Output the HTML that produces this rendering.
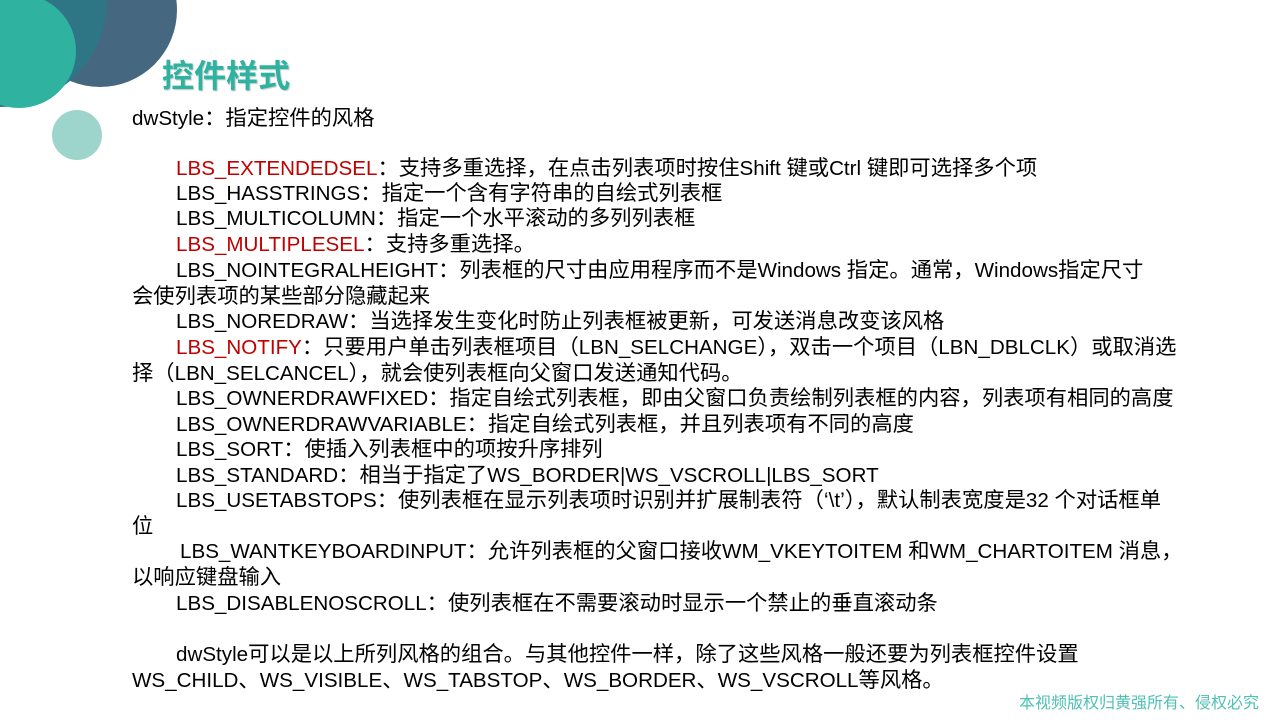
<!DOCTYPE html>
<html><head><meta charset="utf-8"><style>
html,body{margin:0;padding:0;background:#fff;width:1280px;height:720px;overflow:hidden;position:relative}
.l{position:absolute;white-space:nowrap;font-family:"Liberation Sans","Noto Sans CJK SC",sans-serif;font-size:21.3px;line-height:26px;color:#000}
.l i{font-style:normal;font-size:20.6px}
.r{color:#c00000}
</style></head><body>
<svg width="200" height="170" style="position:absolute;left:0;top:0">
<circle cx="100" cy="10" r="77" fill="#456880"/>
<circle cx="0" cy="0" r="107" fill="#2e7586"/>
<circle cx="19" cy="51" r="57" fill="#2fb2a0"/>
<circle cx="77" cy="135" r="25" fill="#9dd5cc"/>
</svg>
<div class="l" style="left:162px;top:56px;font-size:32px;line-height:40px;font-weight:bold;color:#2fb2a0;text-shadow:1px 1px 1px #b7c9c6">控件样式</div>
<div class="l" style="left:132px;top:105px"><i>dwStyle</i>：指定控件的风格</div>
<div class="l" style="left:176px;top:155px"><i class="r">LBS_EXTENDEDSEL</i>：支持多重选择，在点击列表项时按住<i>Shift </i>键或<i>Ctrl </i>键即可选择多个项</div>
<div class="l" style="left:176px;top:180px"><i>LBS_HASSTRINGS</i>：指定一个含有字符串的自绘式列表框</div>
<div class="l" style="left:176px;top:205px"><i>LBS_MULTICOLUMN</i>：指定一个水平滚动的多列列表框</div>
<div class="l" style="left:176px;top:231px"><i class="r">LBS_MULTIPLESEL</i>：支持多重选择。</div>
<div class="l" style="left:176px;top:257px"><i>LBS_NOINTEGRALHEIGHT</i>：列表框的尺寸由应用程序而不是<i>Windows </i>指定。通常，<i>Windows</i>指定尺寸</div>
<div class="l" style="left:132px;top:283px">会使列表项的某些部分隐藏起来</div>
<div class="l" style="left:176px;top:308px"><i>LBS_NOREDRAW</i>：当选择发生变化时防止列表框被更新，可发送消息改变该风格</div>
<div class="l" style="left:176px;top:334px"><i class="r">LBS_NOTIFY</i>：只要用户单击列表框项目（<i>LBN_SELCHANGE</i>），双击一个项目（<i>LBN_DBLCLK</i>）或取消选</div>
<div class="l" style="left:132px;top:360px">择（<i>LBN_SELCANCEL</i>），就会使列表框向父窗口发送通知代码。</div>
<div class="l" style="left:176px;top:385px"><i>LBS_OWNERDRAWFIXED</i>：指定自绘式列表框，即由父窗口负责绘制列表框的内容，列表项有相同的高度</div>
<div class="l" style="left:176px;top:411px"><i>LBS_OWNERDRAWVARIABLE</i>：指定自绘式列表框，并且列表项有不同的高度</div>
<div class="l" style="left:176px;top:436px"><i>LBS_SORT</i>：使插入列表框中的项按升序排列</div>
<div class="l" style="left:176px;top:462px"><i>LBS_STANDARD</i>：相当于指定了<i>WS_BORDER|WS_VSCROLL|LBS_SORT</i></div>
<div class="l" style="left:176px;top:487px"><i>LBS_USETABSTOPS</i>：使列表框在显示列表项时识别并扩展制表符（‘<i>\t</i>’），默认制表宽度是<i>32 </i>个对话框单</div>
<div class="l" style="left:132px;top:513px">位</div>
<div class="l" style="left:180px;top:538px"><i>LBS_WANTKEYBOARDINPUT</i>：允许列表框的父窗口接收<i>WM_VKEYTOITEM </i>和<i>WM_CHARTOITEM </i>消息，</div>
<div class="l" style="left:132px;top:564px">以响应键盘输入</div>
<div class="l" style="left:176px;top:590px"><i>LBS_DISABLENOSCROLL</i>：使列表框在不需要滚动时显示一个禁止的垂直滚动条</div>
<div class="l" style="left:176px;top:641px"><i>dwStyle</i>可以是以上所列风格的组合。与其他控件一样，除了这些风格一般还要为列表框控件设置</div>
<div class="l" style="left:132px;top:667px"><i>WS_CHILD</i>、<i>WS_VISIBLE</i>、<i>WS_TABSTOP</i>、<i>WS_BORDER</i>、<i>WS_VSCROLL</i>等风格。</div>
<div class="l" style="left:1019px;top:694px;font-size:16px;line-height:20px;color:#4fc0b4">本视频版权归黄强所有、侵权必究</div>
</body></html>
